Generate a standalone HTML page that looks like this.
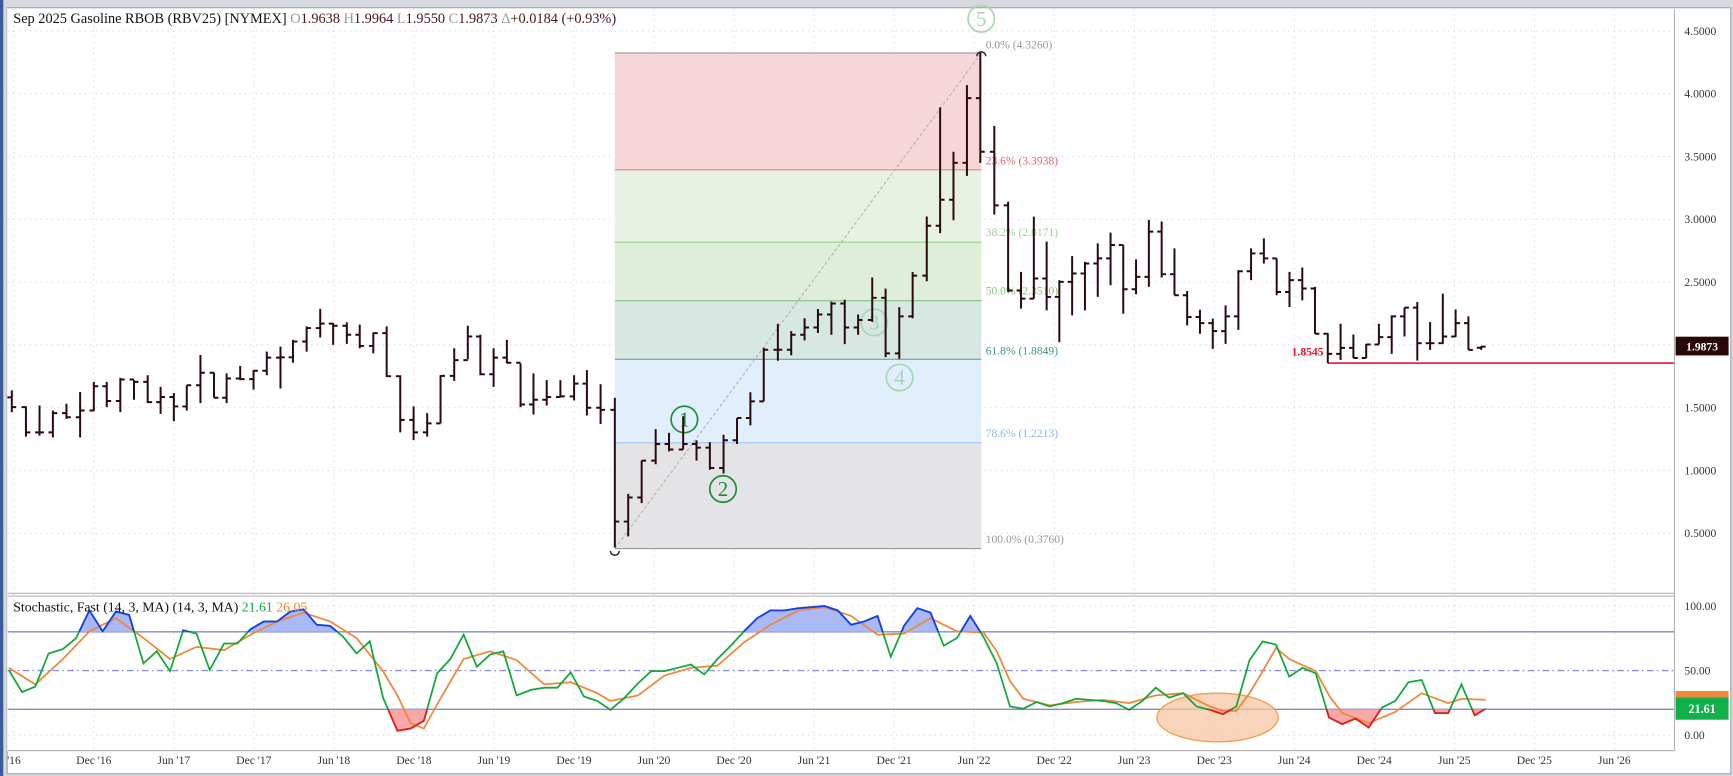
<!DOCTYPE html>
<html><head><meta charset="utf-8"><style>
html,body{margin:0;padding:0;background:#d6d9dd;}
svg{display:block;}
text{font-family:"Liberation Serif",serif;}
</style></head><body>
<svg width="1733" height="776" viewBox="0 0 1570 703" preserveAspectRatio="none" xmlns="http://www.w3.org/2000/svg" xmlns:xlink="http://www.w3.org/1999/xlink">
<defs>
<clipPath id="above"><rect x="7" y="540" width="1510" height="32.4"/></clipPath>
<clipPath id="below"><rect x="7" y="642.6" width="1510" height="40"/></clipPath>
<polyline id="k" points="8,607 20,627 32,622 44,592 57,588 69,578 81,553 93,572 105,554 117,557 130,601 142,590 154,608 166,571 178,574 190,607 203,583 215,583 227,570 239,563 251,563 263,554 275,552 287,566 299,567 311,577 323,592 335,581 347,632 360,662 372,660 384,653 396,610 408,597 420,575 432,604 444,593 456,590 468,630 481,625 493,623 505,623 517,609 529,631 541,635 553,643 565,633 578,619 590,608 602,608 614,605 626,602 638,611 650,597 662,585 674,572 686,560 698,553 711,553 723,551 735,550 747,549 759,553 771,566 783,563 795,558 807,595 819,567 831,551 843,555 855,585 867,578 879,558 891,577 903,601 915,640 927,642 939,636 951,640 963,637 975,633 987,634 999,635 1011,637 1023,643 1035,635 1047,623 1059,632 1072,628 1084,640 1096,643 1108,647 1120,640 1132,598 1144,581 1156,584 1168,613 1180,605 1192,610 1204,650 1216,656 1228,651 1240,659 1252,641 1264,635 1276,618 1288,616 1300,646 1312,646 1324,620 1336,648 1346,642"/>
</defs>
<rect x="0" y="0" width="1570" height="703" fill="#d6d9dd"/>
<rect x="6" y="7" width="1562" height="694" fill="#ffffff" stroke="#a0a4a8" stroke-width="1"/>

<g stroke="#c8c8c8" stroke-width="0.8" stroke-dasharray="1 4">
<path d="M7 28H1517M7 84.9H1517M7 141.8H1517M7 198.6H1517M7 255.5H1517M7 312.4H1517M7 369.4H1517M7 426.3H1517M7 483.1H1517M7 549H1517M7 666H1517"/>
<path d="M12.5 8V680M85 8V680M157.5 8V680M230 8V680M302.5 8V680M375 8V680M447.5 8V680M520 8V680M592.5 8V680M665 8V680M737.5 8V680M810 8V680M882.5 8V680M955 8V680M1027.5 8V680M1100 8V680M1172.5 8V680M1245 8V680M1317.5 8V680M1390 8V680M1462.5 8V680"/>
</g>

<rect x="557" y="48" width="332" height="105.8" fill="#f5cfd1" opacity="0.85"/>
<rect x="557" y="153.8" width="332" height="65.6" fill="#e8f2e4"/>
<rect x="557" y="219.4" width="332" height="53" fill="#deeed9"/>
<rect x="557" y="272.4" width="332" height="53.1" fill="#d6e8e1"/>
<rect x="557" y="325.5" width="332" height="75.5" fill="#e1eefb"/>
<rect x="557" y="401" width="332" height="96" fill="#e4e4e6"/>
<g stroke-width="1">
<path d="M557 48H889" stroke="#9a9a9a"/>
<path d="M557 153.8H889" stroke="#e08a8a"/>
<path d="M557 219.4H889" stroke="#94d08c"/>
<path d="M557 272.4H889" stroke="#86bf84"/>
<path d="M557 325.5H889" stroke="#5ea98c"/>
<path d="M557 401H889" stroke="#a6c6ee"/>
<path d="M557 497H889" stroke="#9a9a9a"/>
</g>
<path d="M557 497L889 48" stroke="#a8a8a8" stroke-width="0.8" stroke-dasharray="3 2" fill="none"/>
<path d="M885 51A4 4 0 0 1 893 51" stroke="#222" stroke-width="1.3" fill="none"/>
<path d="M553 499A4 4 0 0 0 561 499" stroke="#222" stroke-width="1.3" fill="none"/>
<g font-size="10.5">
<text x="893" y="44" fill="#999">0.0% (4.3260)</text>
<text x="893" y="149" fill="#e0606a">23.6% (3.3938)</text>
<text x="893" y="214" fill="#9ccf96">38.2% (2.8171)</text>
<text x="893" y="267" fill="#88bf80">50.0% (2.3510)</text>
<text x="893" y="321" fill="#3a9a7a">61.8% (1.8849)</text>
<text x="893" y="396" fill="#86b6ee">78.6% (1.2213)</text>
<text x="893" y="492" fill="#999">100.0% (0.3760)</text>
</g>

<g fill="none" stroke-width="1.5">
<circle cx="620" cy="380" r="12" stroke="#1c8c34"/>
<circle cx="655" cy="443" r="12" stroke="#1c8c34"/>
<circle cx="792" cy="292" r="12" stroke="#a8d6b0"/>
<circle cx="815" cy="342" r="12" stroke="#a8d6b0"/>
<circle cx="889" cy="17" r="12" stroke="#a8d6b0"/>
</g>
<g font-size="19" text-anchor="middle">
<text x="620" y="386.5" fill="#1c8c34" font-family="Liberation Sans, sans-serif">1</text>
<text x="655" y="449.5" fill="#1c8c34" font-family="Liberation Sans, sans-serif">2</text>
<text x="792" y="298.5" fill="#a8d6b0" font-family="Liberation Sans, sans-serif">3</text>
<text x="815" y="348.5" fill="#a8d6b0" font-family="Liberation Sans, sans-serif">4</text>
<text x="889" y="23.5" fill="#a8d6b0" font-family="Liberation Sans, sans-serif">5</text>
</g>

<path d="M1203 329H1517" stroke="#f0204a" stroke-width="1.6"/>
<text x="1199" y="322" font-size="10.5" fill="#e8102a" text-anchor="end" font-weight="bold">1.8545</text>

<path fill="none" stroke="#2a0a0c" stroke-width="1.8" d="M10.7 353.6V373.4M6.7 360H10.7M10.7 368.8H14.7M23.5 368.2V395.6M19.5 368.8H23.5M23.5 391.7H27.5M35.8 367.3V394.7M31.8 391.7H35.8M35.8 391.7H39.8M47.9 371.9V396.3M43.9 391.7H47.9M47.9 374.3H51.9M60.2 365.8V379.5M56.2 374.3H60.2M60.2 378H64.2M72.6 355.1V396.3M68.6 378H72.6M72.6 371.9H76.6M85 346V372.5M81 371.9H85M85 349.9H89M96.7 346V368.8M92.7 349.9H96.7M96.7 363.3H100.7M109 342.3V373.4M105 363.3H109M109 343.8H113M121.4 344.4V362.1M117.4 343.8H121.4M121.4 346H125.4M133.8 339.9V365.2M129.8 346H133.8M133.8 364.3H137.8M145.5 350.5V374.9M141.5 364.3H145.5M145.5 359.7H149.5M157.5 356V381.6M153.5 359.7H157.5M157.5 368.2H161.5M169.2 349V371.9M165.2 368.2H169.2M169.2 349H173.2M181.6 321.6V365.2M177.6 349H181.6M181.6 337.7H185.6M193.9 337.7V360.3M189.9 337.7H193.9M193.9 360.3H197.9M205.3 338.3V365.2M201.3 360.3H205.3M205.3 342.9H209.3M217.6 331.6V344.4M213.6 342.9H217.6M217.6 343.5H221.6M229.7 335.3V353M225.7 343.5H229.7M229.7 335.9H233.7M241.7 318.5V339.9M237.7 335.9H241.7M241.7 324H245.7M254.1 314V352M250.1 324H254.1M254.1 323.7H258.1M265.4 307.9V328.6M261.4 323.7H265.4M265.4 309.4H269.4M277.8 295.7V318.5M273.8 309.4H277.8M277.8 297.2H281.8M290.1 279.8V305.7M286.1 297.2H290.1M290.1 293.2H294.1M301.8 292.6V312.4M297.8 293.2H301.8M301.8 295.1H305.8M314.2 292V311.5M310.2 295.1H314.2M314.2 303.3H318.2M325.9 294.1V315.5M321.9 303.3H325.9M325.9 313.4H329.9M338.2 301.2V320.1M334.2 313.4H338.2M338.2 301.8H342.2M350.3 295.7V341.4M346.3 301.8H350.3M350.3 340.8H354.3M362.6 339.9V391.7M358.6 340.8H362.6M362.6 380.4H366.6M374.7 368.2V398.7M370.7 380.4H374.7M374.7 391.7H378.7M387 374.3V395.6M383 391.7H387M387 383.5H391M399.1 339.9V383.5M395.1 383.5H399.1M399.1 340.5H403.1M411.5 315.5V345M407.5 340.5H411.5M411.5 326.2H415.5M423.8 295.1V325.5M419.8 326.2H423.8M423.8 304.8H427.8M435.2 303.3V339.9M431.2 304.8H435.2M435.2 339H439.2M447.2 315.5V350.5M443.2 339H447.2M447.2 324H451.2M459.2 307.9V329.2M455.2 324H459.2M459.2 328.6H463.2M471.6 329.2V368.8M467.6 328.6H471.6M471.6 366.4H475.6M483.3 338.3V375.5M479.3 366.4H483.3M483.3 362.1H487.3M495.3 344.4V367.3M491.3 362.1H495.3M495.3 359.7H499.3M507.7 344.4V359.7M503.7 359.7H507.7M507.7 359.1H511.7M520.1 339.9V362.7M516.1 359.1H520.1M520.1 347.5H524.1M531.7 335.3V376.4M527.7 347.5H531.7M531.7 369.4H535.7M544.1 348.1V384.1M540.1 369.4H544.1M544.1 371.3H548.1M557 360.3V496M553 371.3H557M557 472.5H561M569.1 447.4V485.9M565.1 472.5H569.1M569.1 450.7H573.1M581.3 417.3V455.8M577.3 450.7H581.3M581.3 417.3H585.3M594 388.8V420.6M590 417.3H594M594 402.2H598M606.1 392.1V408.9M602.1 402.2H606.1M606.1 407.2H610.1M618.9 377.1V407.2M614.9 407.2H618.9M618.9 402.2H622.9M631 398.8V417.3M627 402.2H631M631 405.5H635M643.1 400.5V425.6M639.1 405.5H643.1M643.1 424H647.1M655.5 393.8V429M651.5 424H655.5M655.5 398.8H659.5M667.7 378.7V402.2M663.7 398.8H667.7M667.7 378.7H671.7M679.8 355.3V385.4M675.8 378.7H679.8M679.8 363.6H683.8M691.9 315.1V363.6M687.9 363.6H691.9M691.9 316.8H695.9M704.7 293.3V326.8M700.7 316.8H704.7M704.7 316.8H708.7M716.8 300V321.8M712.8 316.8H716.8M716.8 303.3H720.8M728.9 288.3V308.4M724.9 303.3H728.9M728.9 296.7H732.9M741 279.9V301.7M737 296.7H741M741 284.9H745M753.2 273.2V303.3M749.2 284.9H753.2M753.2 274.9H757.2M765.3 271.5V311.7M761.3 274.9H765.3M765.3 296.7H769.3M777.4 284.9V303.3M773.4 296.7H777.4M777.4 289.9H781.4M790.2 251.4V291.6M786.2 289.9H790.2M790.2 269.8H794.2M802.3 261.5V323.5M798.3 269.8H802.3M802.3 320.1H806.3M814.7 278.2V325.1M810.7 320.1H814.7M814.7 286.6H818.7M826.8 246.4V288.3M822.8 286.6H826.8M826.8 249.7H830.8M839.6 196.1V254.8M835.6 249.7H839.6M839.6 204.5H843.6M851.7 97.3V211.2M847.7 204.5H851.7M851.7 181H855.7M863.8 137.5V199.5M859.8 181H863.8M863.8 147.5H867.8M876 77.1V159.3M872 147.5H876M876 88.9H880M888.1 48V147.5M884.1 88.9H888.1M888.1 137.5H892.1M900.8 114V194.4M896.8 137.5H900.8M900.8 186.1H904.8M913.3 182.7V264.8M909.3 186.1H913.3M913.3 263.2H917.3M925 246.3V279.6M921 263.2H925M925 270.5H929M936.6 196.2V270.5M932.6 270.5H936.6M936.6 252.3H940.6M948.2 218.9V281.2M944.2 252.3H948.2M948.2 269H952.2M959.7 253.8V310M955.7 269H959.7M959.7 255.4H963.7M971.3 232V285.7M967.3 255.4H971.3M971.3 247.8H975.3M982.9 237.2V281.2M978.9 247.8H982.9M982.9 238.7H986.9M994.5 220.5V269M990.5 238.7H994.5M994.5 234.1H998.5M1006.1 210.7V258.4M1002.1 234.1H1006.1M1006.1 222H1010.1M1017.6 222V284.2M1013.6 222H1017.6M1017.6 262H1021.6M1029.2 235V266.6M1025.2 262H1029.2M1029.2 250.8H1033.2M1040.8 199.2V259.9M1036.8 250.8H1040.8M1040.8 209.8H1044.8M1052.4 200.7V251.4M1048.4 209.8H1052.4M1052.4 248.4H1056.4M1064 225V267.5M1060 248.4H1064M1064 267.5H1068M1075.5 263.6V294.8M1071.5 267.5H1075.5M1075.5 287.2H1079.5M1087.1 280.6V302.4M1083.1 287.2H1087.1M1087.1 292.7H1091.1M1098.7 288.7V316.1M1094.7 292.7H1098.7M1098.7 300H1102.7M1110.3 276.6V311.5M1106.3 300H1110.3M1110.3 286.6H1114.3M1121.9 244.7V298.8M1117.9 286.6H1121.9M1121.9 245.7H1125.9M1133.4 225V253.8M1129.4 245.7H1133.4M1133.4 229.6H1137.4M1145 215.9V238.7M1141 229.6H1145M1145 234.1H1149M1156.6 234.1V267.5M1152.6 234.1H1156.6M1156.6 264.5H1160.6M1168.2 246.3V278.1M1164.2 264.5H1168.2M1168.2 253.8H1172.2M1179.8 242.3V272.1M1175.8 253.8H1179.8M1179.8 261.4H1183.8M1191.3 259.9V302.4M1187.3 261.4H1191.3M1191.3 302.4H1195.3M1202.9 301.8V329.1M1198.9 302.4H1202.9M1202.9 320.6H1206.9M1214.5 293.3V326.1M1210.5 320.6H1214.5M1214.5 315.2H1218.5M1226.1 303V324.3M1222.1 315.2H1226.1M1226.1 324.3H1230.1M1237.7 311.5V324.3M1233.7 324.3H1237.7M1237.7 312.1H1241.7M1249.2 293.3V312.1M1245.2 312.1H1249.2M1249.2 305.4H1253.2M1260.8 285.7V320.6M1256.8 305.4H1260.8M1260.8 286.6H1264.8M1272.4 278.7V304.8M1268.4 286.6H1272.4M1272.4 278.7H1276.4M1284 273.6V326.7M1280 278.7H1284M1284 310.9H1288M1295.6 291.8V317M1291.6 310.9H1295.6M1295.6 310.9H1299.6M1307.1 266V311.5M1303.1 310.9H1307.1M1307.1 304.8H1311.1M1318.7 280.3V305.4M1314.7 304.8H1318.7M1318.7 292.7H1322.7M1330.3 286.6V317M1326.3 292.7H1330.3M1330.3 317H1334.3M1341.9 313.6V317M1337.9 315H1341.9M1341.9 314H1345.9"/>

<text x="12" y="21" font-size="13" fill="#111">Sep 2025 Gasoline RBOB (RBV25) [NYMEX] <tspan fill="#999">O</tspan><tspan fill="#4a1418">1.9638 </tspan><tspan fill="#999">H</tspan><tspan fill="#4a1418">1.9964 </tspan><tspan fill="#999">L</tspan><tspan fill="#4a1418">1.9550 </tspan><tspan fill="#999">C</tspan><tspan fill="#4a1418">1.9873 </tspan><tspan fill="#999">Δ</tspan><tspan fill="#4a1418">+0.0184 (+0.93%)</tspan></text>

<path d="M7 537.5H1517M7 540H1517" stroke="#b8b8b8" stroke-width="1"/>

<path d="M7 572.4H1517M7 642.6H1517" stroke="#7b86c8" stroke-width="1.2"/>
<path d="M7 607.5H1517" stroke="#8a92d4" stroke-width="1.2" stroke-dasharray="6 3 1.5 3"/>
<ellipse cx="1103" cy="650" rx="55" ry="22" fill="#f6c6a4" fill-opacity="0.75" stroke="#f0a050" stroke-width="1.2"/>

<polygon clip-path="url(#above)" fill="#aab8f6" points="8,572.4 8,607 20,627 32,622 44,592 57,588 69,578 81,553 93,572 105,554 117,557 130,601 142,590 154,608 166,571 178,574 190,607 203,583 215,583 227,570 239,563 251,563 263,554 275,552 287,566 299,567 311,577 323,592 335,581 347,632 360,662 372,660 384,653 396,610 408,597 420,575 432,604 444,593 456,590 468,630 481,625 493,623 505,623 517,609 529,631 541,635 553,643 565,633 578,619 590,608 602,608 614,605 626,602 638,611 650,597 662,585 674,572 686,560 698,553 711,553 723,551 735,550 747,549 759,553 771,566 783,563 795,558 807,595 819,567 831,551 843,555 855,585 867,578 879,558 891,577 903,601 915,640 927,642 1346,642 1346,572.4"/>
<polygon clip-path="url(#below)" fill="#f8a8a8" points="8,642.6 8,607 20,627 32,622 44,592 130,601 335,581 347,632 360,662 372,660 384,653 396,610 408,597 505,623 517,609 529,631 541,635 553,643 565,633 578,619 1072,628 1084,640 1096,643 1108,647 1120,640 1132,598 1180,605 1192,610 1204,650 1216,656 1228,651 1240,659 1252,641 1264,635 1276,618 1288,616 1300,646 1312,646 1324,620 1336,648 1346,642 1346,642.6"/>

<polyline fill="none" stroke="#f0883c" stroke-width="1.6" points="8,605 32,620 57,597 81,572 105,560 130,578 154,597 178,586 203,589 227,575 251,563 275,555 299,563 323,578 347,608 360,630 372,655 384,660 396,638 420,597 444,590 468,598 493,620 517,618 541,628 553,635 578,630 602,612 626,605 650,603 674,582 698,566 723,553 747,550 771,558 795,575 819,574 843,560 867,572 891,573 903,590 915,617 927,633 951,639 975,636 999,634 1023,637 1047,630 1072,628 1096,640 1108,644 1120,644 1132,628 1144,608 1156,587 1168,597 1192,608 1204,630 1216,646 1240,655 1264,645 1288,628 1312,637 1324,633 1346,634"/>
<g fill="none" stroke-width="1.6">
<use href="#k" xlink:href="#k" stroke="#14a83a"/>
<use href="#k" xlink:href="#k" stroke="#1a3cf0" clip-path="url(#above)"/>
<use href="#k" xlink:href="#k" stroke="#f01818" clip-path="url(#below)"/>
</g>
<text x="12" y="554" font-size="12.5" fill="#111">Stochastic, Fast (14, 3, MA)  (14, 3, MA) <tspan fill="#14a83a">21.61</tspan> <tspan fill="#f0883c">26.05</tspan></text>

<path d="M1517 8V680M7 680H1517" stroke="#b0b0b0" stroke-width="1"/>
<g font-size="10.5" fill="#333">
<text x="1526" y="31.5">4.5000</text>
<text x="1526" y="88.4">4.0000</text>
<text x="1526" y="145.3">3.5000</text>
<text x="1526" y="202.1">3.0000</text>
<text x="1526" y="259">2.5000</text>
<text x="1526" y="372.9">1.5000</text>
<text x="1526" y="429.8">1.0000</text>
<text x="1526" y="486.6">0.5000</text>
<text x="1526" y="552.5">100.00</text>
<text x="1526" y="611">50.00</text>
<text x="1526" y="669.5">0.00</text>
</g>
<rect x="1518" y="305" width="48" height="17" fill="#2a0808"/>
<text x="1542" y="317.5" font-size="10.5" fill="#fff" font-weight="bold" text-anchor="middle">1.9873</text>
<rect x="1518" y="626" width="48" height="8" fill="#f0883c"/>
<rect x="1518" y="632" width="48" height="20" fill="#10b04a"/>
<text x="1542" y="646" font-size="11" fill="#fff" font-weight="bold" text-anchor="middle">21.61</text>

<g font-size="10.5" fill="#333" text-anchor="middle">
<text x="4" y="692">Jun '16</text>
<text x="85" y="692">Dec '16</text>
<text x="157.5" y="692">Jun '17</text>
<text x="230" y="692">Dec '17</text>
<text x="302.5" y="692">Jun '18</text>
<text x="375" y="692">Dec '18</text>
<text x="447.5" y="692">Jun '19</text>
<text x="520" y="692">Dec '19</text>
<text x="592.5" y="692">Jun '20</text>
<text x="665" y="692">Dec '20</text>
<text x="737.5" y="692">Jun '21</text>
<text x="810" y="692">Dec '21</text>
<text x="882.5" y="692">Jun '22</text>
<text x="955" y="692">Dec '22</text>
<text x="1027.5" y="692">Jun '23</text>
<text x="1100" y="692">Dec '23</text>
<text x="1172.5" y="692">Jun '24</text>
<text x="1245" y="692">Dec '24</text>
<text x="1317.5" y="692">Jun '25</text>
<text x="1390" y="692">Dec '25</text>
<text x="1462.5" y="692">Jun '26</text>
</g>
<rect x="0" y="0" width="6" height="703" fill="#d6d9dd"/>
<rect x="0" y="0" width="3" height="703" fill="#3b5b9b"/>
<rect x="6" y="680.5" width="1" height="20" fill="#a0a4a8"/>
</svg>
</body></html>
